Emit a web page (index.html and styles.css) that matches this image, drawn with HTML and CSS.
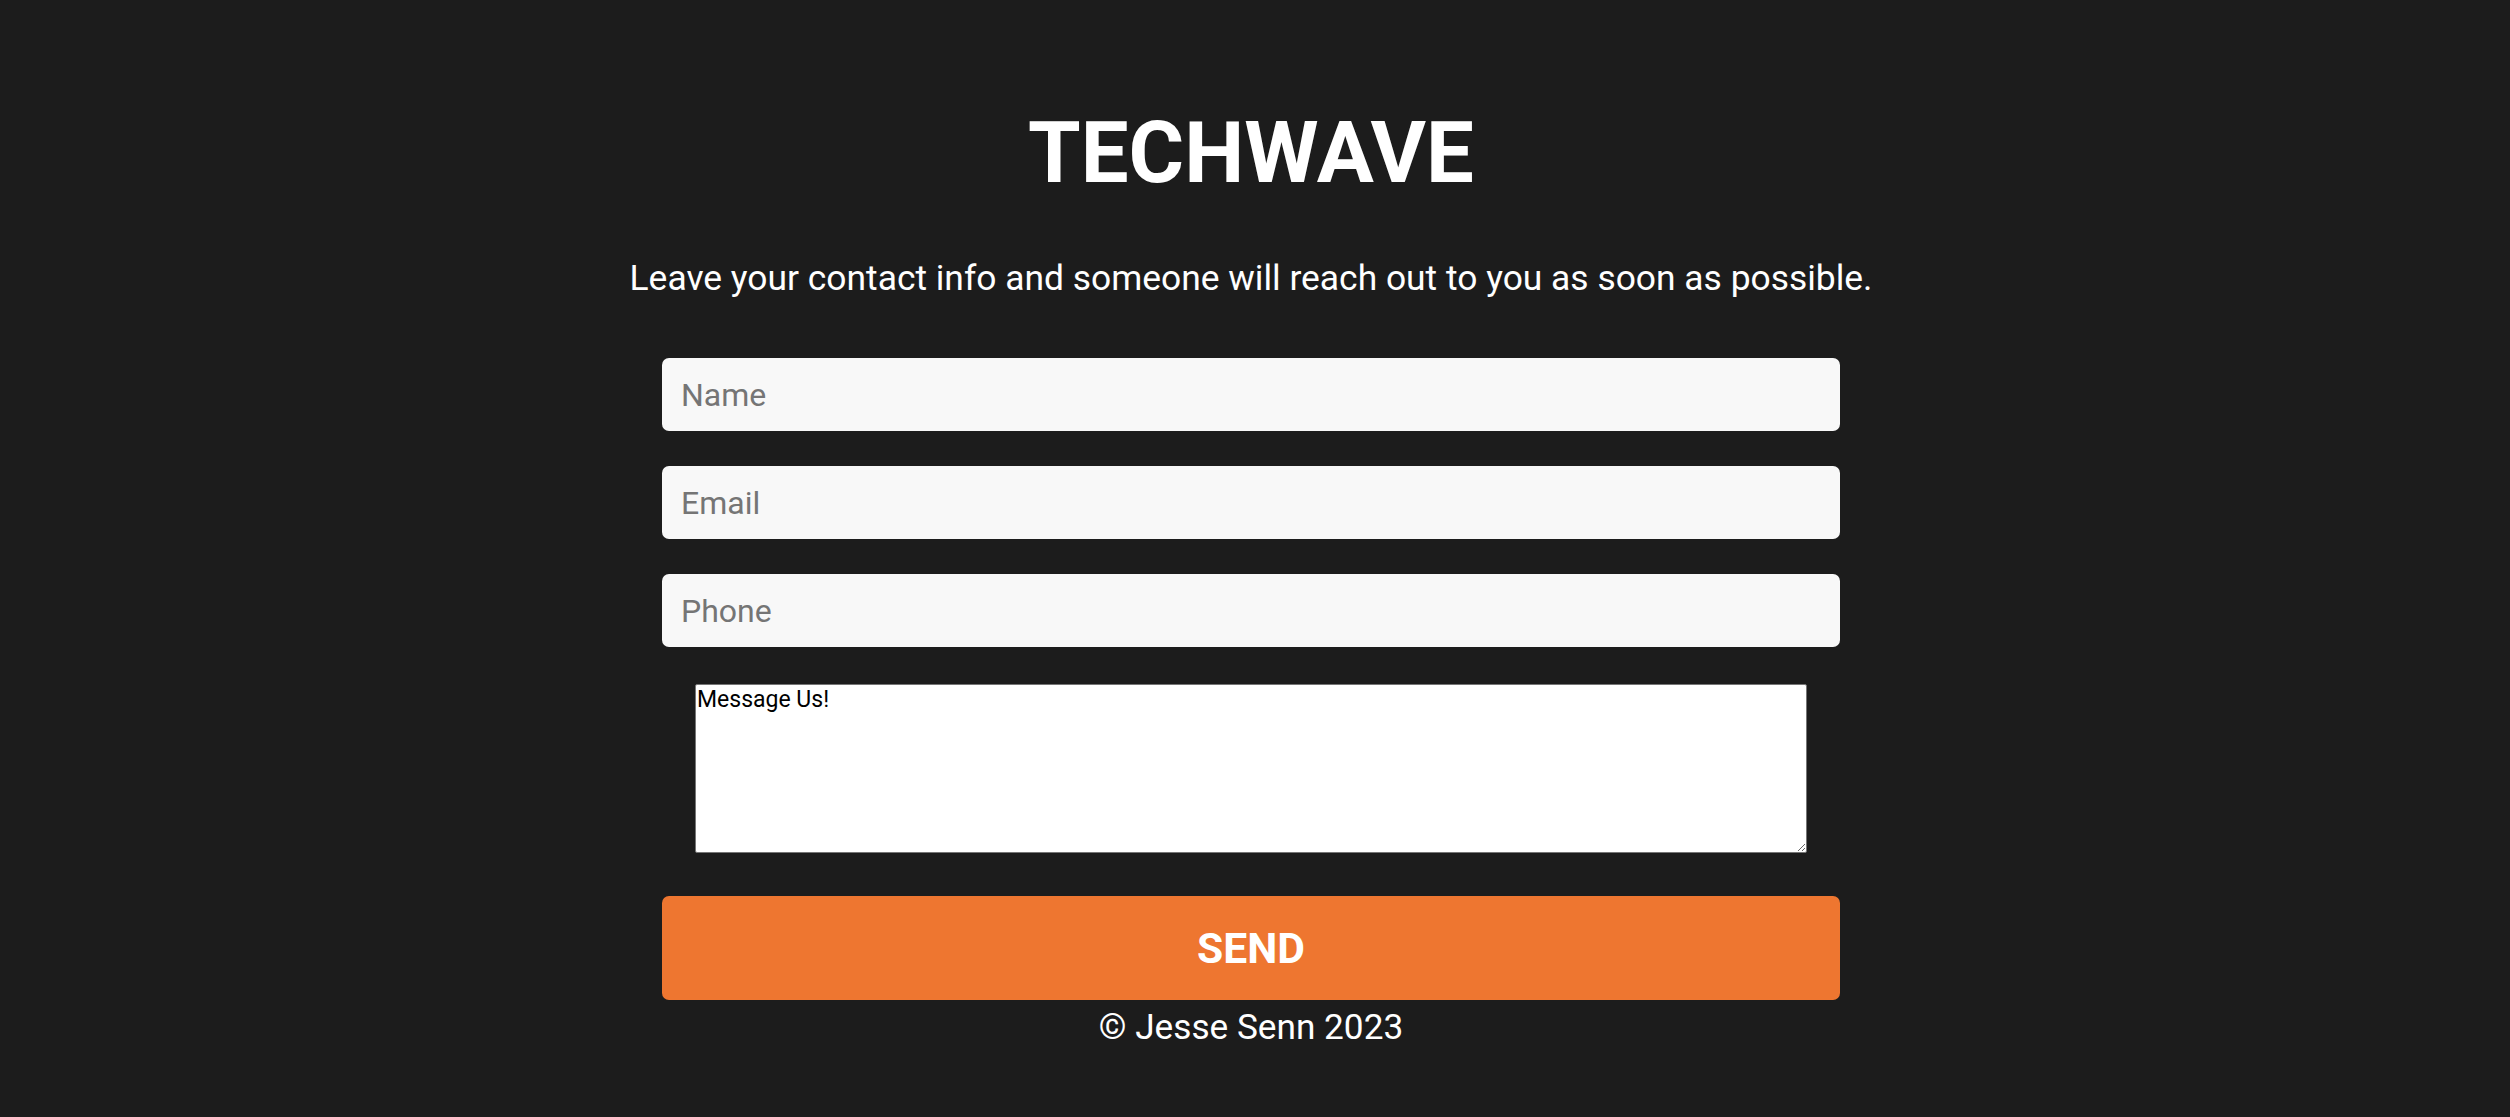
FILE: index.html
```html
<!DOCTYPE html>
<html lang="en">
<head>
<meta charset="utf-8">
<title>TechWave</title>
<link rel="stylesheet" href="styles.css">
</head>
<body>
<main class="page">
  <h1 class="title">TECHWAVE</h1>
  <p class="intro">Leave your contact info and someone will reach out to you as soon as possible.</p>
  <form class="contact-form">
    <input class="field" type="text" placeholder="Name">
    <input class="field" type="email" placeholder="Email">
    <input class="field" type="tel" placeholder="Phone">
    <textarea class="message">Message Us!</textarea>
    <button class="send" type="button">SEND</button>
  </form>
  <footer class="footer">© Jesse Senn 2023</footer>
</main>
</body>
</html>
```

FILE: styles.css
```css
html, body {
  margin: 0;
  padding: 0;
  background: #1c1c1c;
  height: 100%;
}
body {
  font-family: Roboto, "Liberation Sans", sans-serif;
  color: #ffffff;
  overflow: hidden;
}
.page {
  display: flex;
  flex-direction: column;
  align-items: center;
  padding: 111px 8px 0 0;
}
.title {
  margin: 0;
  font-size: 85px;
  line-height: 84px;
  font-weight: 700;
}
.intro {
  margin: 63px 0 0;
  font-size: 35.4px;
  line-height: 40px;
  font-weight: 400;
}
.contact-form {
  margin-top: 60px;
  width: 1178px;
  display: flex;
  flex-direction: column;
  align-items: center;
}
.field {
  box-sizing: border-box;
  width: 100%;
  height: 73px;
  margin: 0 0 35px;
  padding: 0 19px;
  border: none;
  border-radius: 7px;
  background: #f8f8f8;
  font-family: Roboto, "Liberation Sans", sans-serif;
  font-size: 32px;
  color: #222;
  outline: none;
}
.field::placeholder {
  color: #757575;
}
.message {
  box-sizing: border-box;
  width: 1112px;
  height: 169px;
  margin: 2px 0 0;
  padding: 2px 1px;
  border: 1px solid #767676;
  border-radius: 2px;
  background: #ffffff;
  font-family: Roboto, "Liberation Sans", sans-serif;
  font-size: 23px;
  line-height: 1.15;
  color: #000;
}
.send {
  box-sizing: border-box;
  width: 100%;
  height: 104px;
  margin-top: 43px;
  border: none;
  border-radius: 7px;
  background: #ee7630;
  color: #ffffff;
  font-family: Roboto, "Liberation Sans", sans-serif;
  font-size: 42.6px;
  font-weight: 700;
  cursor: pointer;
}
.footer {
  margin-top: 7px;
  font-size: 35.2px;
  line-height: 40px;
}
```
